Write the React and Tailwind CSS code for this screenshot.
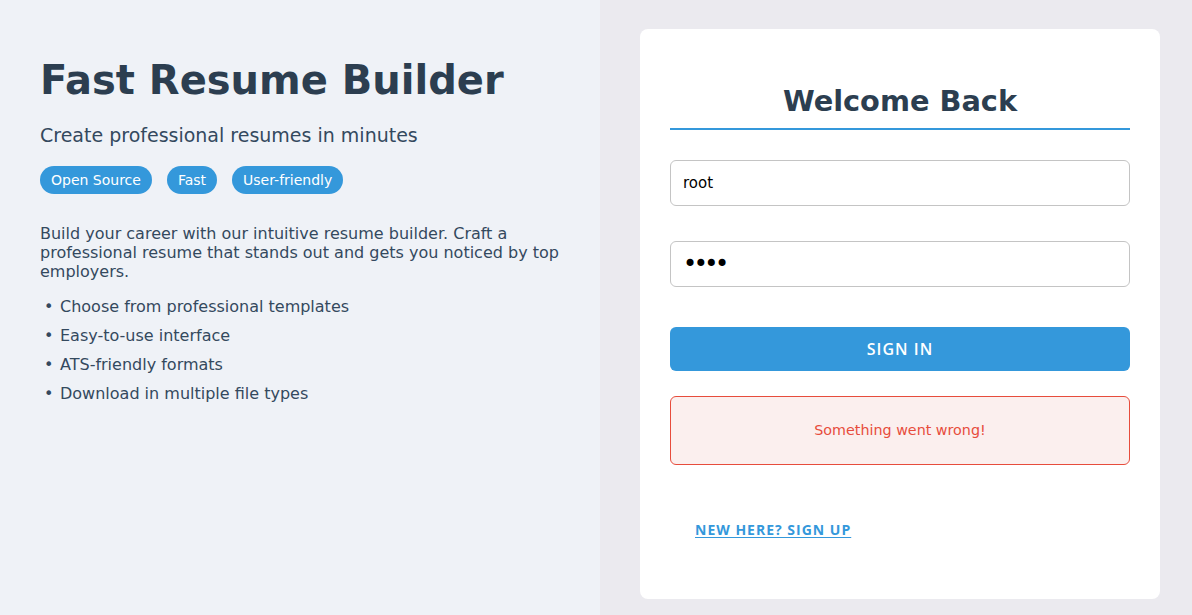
export default function App() {
  const tags = ["Open Source", "Fast", "User-friendly"];
  const features = [
    "Choose from professional templates",
    "Easy-to-use interface",
    "ATS-friendly formats",
    "Download in multiple file types",
  ];

  return (
    <div
      className="flex h-[615px] w-full overflow-hidden"
      style={{ fontFamily: '"DejaVu Sans", sans-serif' }}
    >
      {/* left intro panel */}
      <div className="w-[600px] shrink-0 bg-[#eff2f7] px-10 pt-[52px]">
        <h1 className="text-[40px] font-bold leading-[56px] text-[#2c3e50]">
          Fast Resume Builder
        </h1>
        <p className="mt-[15px] text-[19px] leading-[24px] text-[#34495e]">
          Create professional resumes in minutes
        </p>
        <div className="mt-[19px] flex gap-[15px]">
          {tags.map((t) => (
            <span
              key={t}
              className="flex h-[28px] items-center rounded-full bg-[#3498db] px-[11px] text-[14px] text-white"
            >
              {t}
            </span>
          ))}
        </div>
        <p className="mt-[30px] text-[16px] leading-[19px] text-[#34495e]">
          Build your career with our intuitive resume builder. Craft a professional resume that stands out and gets you noticed by top employers.
        </p>
        <ul className="mt-[16px] flex flex-col gap-[10px] text-[16px] leading-[19px] text-[#34495e]">
          {features.map((f) => (
            <li key={f} className="flex items-center">
              <span className="w-5 pl-[4px]">•</span>
              <span>{f}</span>
            </li>
          ))}
        </ul>
      </div>

      {/* right login area */}
      <div className="flex-1 bg-[#ebeaef] pl-10 pr-8 pt-[29px]">
        <div className="h-[570px] rounded-lg bg-white px-[30px] pt-[54px]">
          <h2 className="border-b-2 border-[#3498db] pb-[9px] text-center text-[28.8px] font-bold leading-[36px] text-[#2c3e50]">
            Welcome Back
          </h2>
          <form className="mt-[30px] flex flex-col">
            <input
              type="text"
              defaultValue="root"
              className="h-[46px] rounded-md border border-[#c4c4c4] px-3 text-[15px] text-black outline-none"
            />
            <input
              type="password"
              defaultValue="root"
              className="mt-[35px] h-[46px] rounded-md border border-[#c4c4c4] px-3 text-[24px] tracking-[-3.5px] text-black outline-none"
            />
            <button
              type="button"
              className="mt-[40px] h-[44px] rounded-md bg-[#3498db] text-[16px] font-semibold tracking-[1px] text-white"
              style={{ fontFamily: '"Open Sans", sans-serif' }}
            >
              SIGN IN
            </button>
          </form>
          <div className="mt-[25px] flex h-[69px] items-center justify-center rounded-md border border-[#e74c3c] bg-[#fbefee] text-[14.3px] text-[#e74c3c]">
            Something went wrong!
          </div>
          <div className="mt-[53px] px-[25px]">
            <a
              href="#"
              className="text-[14px] font-bold tracking-[1px] text-[#3498db] underline underline-offset-2"
              style={{ fontFamily: '"Open Sans", sans-serif' }}
            >
              NEW HERE? SIGN UP
            </a>
          </div>
        </div>
      </div>
    </div>
  );
}
